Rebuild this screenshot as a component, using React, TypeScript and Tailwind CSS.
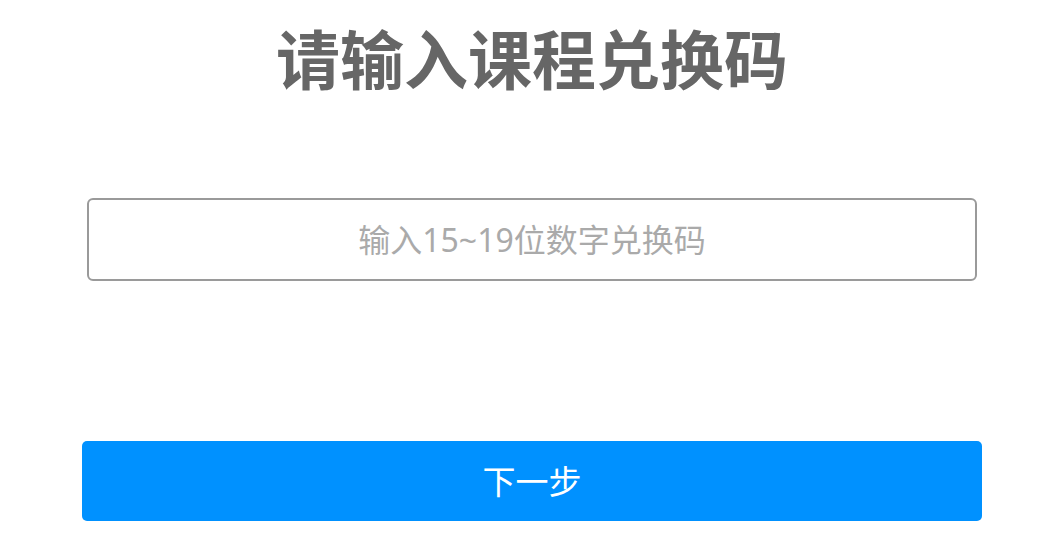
export default function App() {
  return (
    <div
      className="w-[1062px] h-[560px] bg-white flex flex-col items-center pl-[2px]"
      style={{ fontFamily: '"Noto Sans", "Noto Sans CJK SC", sans-serif' }}
    >
      <h1 className="mt-[28px] text-[64px] leading-none font-bold text-[#666666]">
        请输入课程兑换码
      </h1>
      <input
        className="mt-[106px] w-[890px] h-[83px] border-2 border-[#9a9a9a] rounded-[6px] text-center text-[32px] text-[#333] placeholder:text-[#aaaaaa] outline-none"
        placeholder="输入15~19位数字兑换码"
      />
      <button className="mt-[160px] w-[900px] h-[80px] rounded-[5px] bg-[#0091ff] text-white text-[33px] leading-none">
        下一步
      </button>
    </div>
  );
}
